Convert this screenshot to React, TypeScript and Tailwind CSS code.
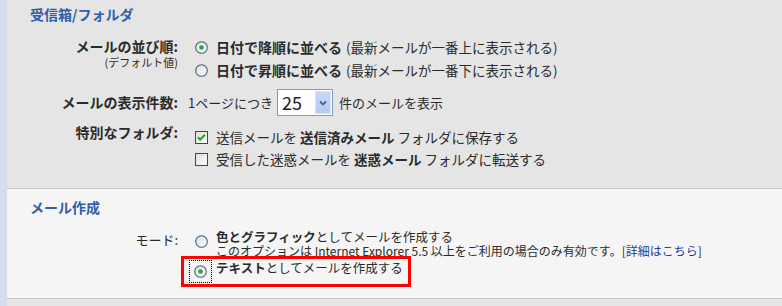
import React from 'react'

const font = { fontFamily: '"Noto Sans CJK JP", "Liberation Sans", sans-serif' }

function Radio({ checked }: { checked?: boolean }) {
  return (
    <svg width="13" height="13" viewBox="0 0 13 13" className="shrink-0">
      <defs>
        <linearGradient id="rg" x1="0" y1="0" x2="1" y2="1">
          <stop offset="0" stopColor="#dcdcd6" />
          <stop offset="1" stopColor="#ffffff" />
        </linearGradient>
      </defs>
      <circle cx="6.5" cy="6.5" r="5.8" fill="url(#rg)" stroke="#3f5f8c" strokeWidth="1.1" />
      {checked && <circle cx="6.5" cy="6.5" r="2.3" fill="#2ea52e" />}
    </svg>
  )
}

function Checkbox({ checked }: { checked?: boolean }) {
  return (
    <svg width="13" height="13" viewBox="0 0 13 13" className="shrink-0">
      <defs>
        <linearGradient id="cg" x1="0" y1="0" x2="1" y2="1">
          <stop offset="0" stopColor="#dcdcd6" />
          <stop offset="1" stopColor="#ffffff" />
        </linearGradient>
      </defs>
      <rect x="0.5" y="0.5" width="12" height="12" fill="url(#cg)" stroke="#1c5180" />
      {checked && <path d="M3 6.2l2.2 2.3L10 3.8" fill="none" stroke="#21a121" strokeWidth="2" />}
    </svg>
  )
}

export default function App() {
  return (
    <div className="flex w-[782px] h-[306px] overflow-hidden bg-[#e5e5e5] text-[#2b2b2b]" style={font}>
      <div className="w-[7px] shrink-0 bg-[#d5dceb]" />
      <div className="flex-1 flex flex-col">
        {/* 受信箱/フォルダ */}
        <div className="h-[189px] shrink-0 border-b border-[#c8c8c8] bg-[#e5e5e5]">
          <h2 className="pl-[23px] pt-[5px] text-[14px] font-bold leading-[18px] text-[#2f5fa8]">受信箱/フォルダ</h2>

          <div className="flex mt-[15px]">
            <div className="w-[171px] text-right">
              <div className="text-[14px] font-bold leading-[16px]">メールの並び順:</div>
              <div className="text-[11px] leading-[12px] mt-[2px]">(デフォルト値)</div>
            </div>
            <div className="ml-[17px] flex flex-col gap-[8px] mt-[2px]">
              <label className="flex items-center h-[15px]">
                <Radio checked />
                <span className="ml-[8px] text-[14px] font-bold">日付で降順に並べる</span>
                <span className="ml-[4px] text-[13.5px]">(最新メールが一番上に表示される)</span>
              </label>
              <label className="flex items-center h-[15px]">
                <Radio />
                <span className="ml-[8px] text-[14px] font-bold">日付で昇順に並べる</span>
                <span className="ml-[4px] text-[13.5px]">(最新メールが一番下に表示される)</span>
              </label>
            </div>
          </div>

          <div className="flex items-center mt-[11px]">
            <div className="w-[171px] text-right text-[14px] font-bold">メールの表示件数:</div>
            <div className="ml-[10px] flex items-center">
              <span className="text-[13px]">1ページにつき</span>
              <div className="ml-[4px] flex w-[56px] h-[27px] border border-[#7f9db9] bg-white">
                <span className="flex-1 pl-[4px] text-[18px] leading-[24px] text-[#222]">25</span>
                <span className="w-[16px] m-[1px] flex items-center justify-center bg-gradient-to-b from-[#c7d8fb] to-[#b5cbf5] border border-[#d6e2fb]">
                  <svg width="8" height="6" viewBox="0 0 8 6">
                    <path d="M1 1.5l3 3 3-3" fill="none" stroke="#4d6185" strokeWidth="1.8" />
                  </svg>
                </span>
              </div>
              <span className="ml-[6px] text-[13px]">件のメールを表示</span>
            </div>
          </div>

          <div className="flex mt-[8px]">
            <div className="w-[171px] text-right text-[14px] font-bold leading-[17px]">特別なフォルダ:</div>
            <div className="ml-[17px] flex flex-col gap-[7px] mt-[6px]">
              <label className="flex items-center h-[15px] text-[13.5px]">
                <Checkbox checked />
                <span className="ml-[8px]">送信メールを <b>送信済みメール</b> フォルダに保存する</span>
              </label>
              <label className="flex items-center h-[15px] text-[13.5px]">
                <Checkbox />
                <span className="ml-[8px]">受信した迷惑メールを <b>迷惑メール</b> フォルダに転送する</span>
              </label>
            </div>
          </div>
        </div>

        {/* メール作成 */}
        <div className="h-[110px] shrink-0 border-b border-[#c8c8c8] bg-[#f5f5f5]">
          <h2 className="pl-[23px] pt-[9px] text-[14px] font-bold leading-[18px] text-[#2f5fa8]">メール作成</h2>
          <div className="flex mt-[14px]">
            <div className="w-[171px] text-right text-[13px] leading-[16px] pt-[2px]">モード:</div>
            <div className="ml-[17px] flex flex-col">
              <div className="flex items-start">
                <span className="mt-[5px]"><Radio /></span>
                <div className="ml-[8px]">
                  <div className="text-[12.5px] leading-[14px]"><b>色とグラフィック</b>としてメールを作成する</div>
                  <div className="text-[12px] leading-[14px]">
                    このオプションは Internet Explorer 5.5 以上をご利用の場合のみ有効です。[<span className="text-[#1a3fa0]">詳細はこちら</span>]
                  </div>
                </div>
              </div>
              <div className="relative flex items-start mt-[-2px] h-[31px]">
                <div className="absolute left-[-14px] top-0 w-[230px] h-[31px] border-[3px] border-[#ff0000]" />
                <span className="ml-[-6px] mt-[4px] w-[23px] h-[23px] flex items-center justify-center border border-dotted border-black">
                  <Radio checked />
                </span>
                <span className="ml-[4px] mt-[4px] text-[12.5px] leading-[16px]"><b>テキスト</b>としてメールを作成する</span>
              </div>
            </div>
          </div>
        </div>
      </div>
    </div>
  )
}
